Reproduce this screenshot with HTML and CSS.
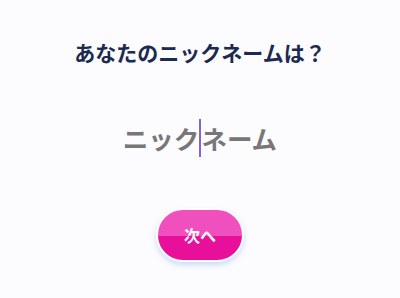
FILE: index.html
```html
<!DOCTYPE html>
<html lang="ja">
<head>
<meta charset="utf-8">
<link rel="stylesheet" href="styles.css">
</head>
<body>
<main class="screen">
  <h1 class="title">あなたのニックネームは？</h1>
  <div class="field">
    <span class="ph">ニック</span><span class="caret"></span><span class="ph">ネーム</span>
  </div>
  <button class="next">次へ</button>
</main>
</body>
</html>
```
FILE: styles.css
```css
html, body {
  margin: 0;
  padding: 0;
  background: #fcfbfe;
}
.screen {
  width: 400px;
  height: 298px;
  display: flex;
  flex-direction: column;
  align-items: center;
  font-family: "Noto Sans CJK JP", "Noto Sans", sans-serif;
}
.title {
  margin: 38px 0 0 0;
  font-size: 21px;
  line-height: 28px;
  font-weight: 700;
  color: #1b2a4e;
  letter-spacing: 0;
}
.field {
  margin-top: 52px;
  display: flex;
  align-items: center;
  height: 40px;
}
.ph {
  font-size: 25.5px;
  line-height: 40px;
  font-weight: 700;
  color: #777777;
}
.caret {
  width: 2px;
  height: 38px;
  background: #7e66d8;
}
.next {
  margin-top: 50px;
  box-sizing: border-box;
  width: 88px;
  height: 54px;
  border-radius: 27px;
  border: 2px solid #ffffff;
  background: linear-gradient(to bottom, #f050bd 0%, #f050bd 52%, #e8109b 52%, #e8109b 100%);
  box-shadow: 0 3px 5px rgba(120, 160, 230, 0.35);
  color: #ffffff;
  font-family: "Noto Sans CJK JP", sans-serif;
  font-size: 16px;
  font-weight: 700;
  padding: 0;
}
```
